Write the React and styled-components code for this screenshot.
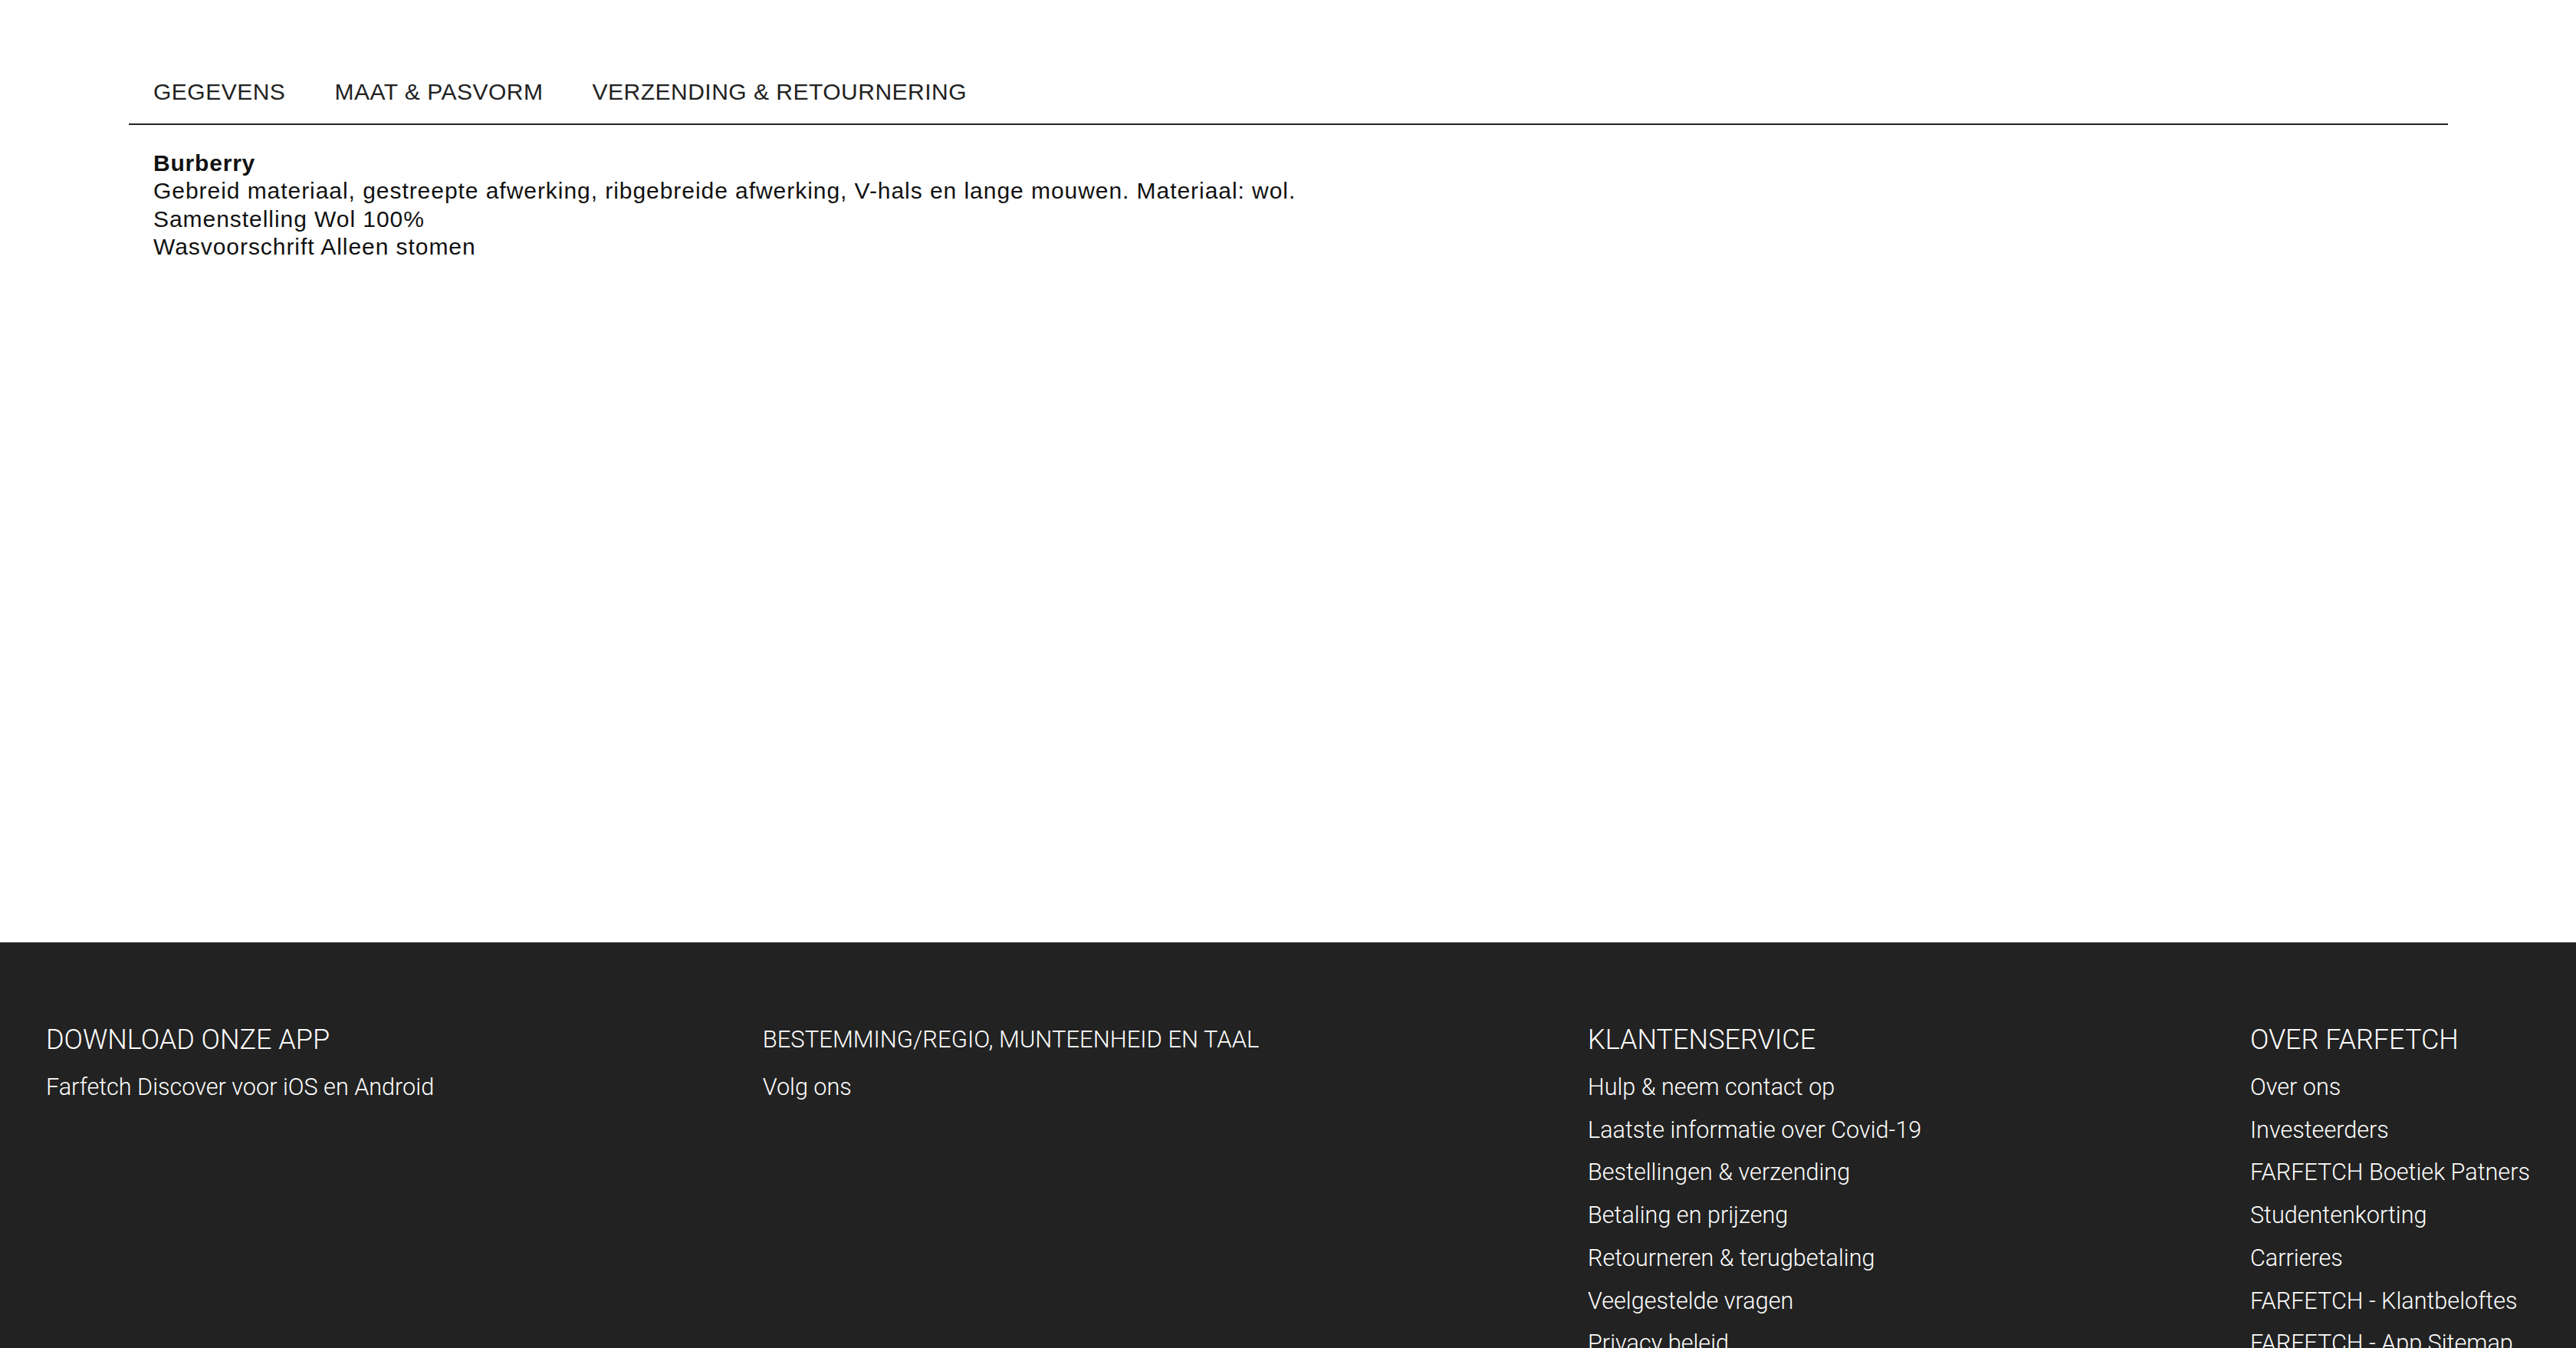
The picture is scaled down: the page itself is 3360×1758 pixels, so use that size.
import React from "react";
import styled, { createGlobalStyle } from "styled-components";

const Global = createGlobalStyle`
  html, body { margin: 0; padding: 0; background: #ffffff; }
  body { font-family: "Liberation Sans", Arial, sans-serif; color: #222222; }
  * { box-sizing: border-box; }
`;

const Main = styled.main`
  min-height: 1229px;
  padding: 102px 167px 0 168px;
`;

const TabBar = styled.nav`
  display: flex;
  gap: 64px;
  padding: 0 32px 23px;
  border-bottom: 2px solid #222222;
`;

const Tab = styled.span`
  font-size: 30px;
  line-height: 36px;
  letter-spacing: 0.5px;
  color: #222222;
  text-transform: uppercase;
  white-space: nowrap;
`;

const Details = styled.section`
  padding: 32px 32px 0;
  font-size: 30px;
  line-height: 36.4px;
  letter-spacing: 0.95px;
  color: #111111;
`;

const Brand = styled.p`
  margin: 0;
  font-weight: 700;
  letter-spacing: 0.8px;
`;

const Line = styled.p`
  margin: 0;
`;

const Footer = styled.footer`
  background: #222222;
  color: #ffffff;
  display: flex;
  justify-content: space-between;
  padding: 105px 60px 80px;
  font-family: Roboto, "Liberation Sans", sans-serif;
  font-weight: 300;
`;

const Column = styled.div`
  display: flex;
  flex-direction: column;
`;

const Heading = styled.h3`
  margin: 0 0 12px;
  font-weight: 300;
  font-size: ${(p) => (p.$small ? "31px" : "36px")};
  line-height: 44px;
  white-space: nowrap;
`;

const LinkList = styled.ul`
  list-style: none;
  margin: 0;
  padding: 0;
`;

const LinkItem = styled.li`
  font-size: 30.6px;
  line-height: 55.7px;
  white-space: nowrap;
  color: #ffffff;
`;

const columns = [
  { title: "DOWNLOAD ONZE APP", links: ["Farfetch Discover voor iOS en Android"] },
  { title: "BESTEMMING/REGIO, MUNTEENHEID EN TAAL", small: true, links: ["Volg ons"] },
  {
    title: "KLANTENSERVICE",
    links: [
      "Hulp & neem contact op",
      "Laatste informatie over Covid-19",
      "Bestellingen & verzending",
      "Betaling en prijzeng",
      "Retourneren & terugbetaling",
      "Veelgestelde vragen",
      "Privacy beleid",
      "Algemene voorwaarden",
    ],
  },
  {
    title: "OVER FARFETCH",
    links: [
      "Over ons",
      "Investeerders",
      "FARFETCH Boetiek Patners",
      "Studentenkorting",
      "Carrieres",
      "FARFETCH - Klantbeloftes",
      "FARFETCH - App Sitemap",
      "Sitemap",
    ],
  },
];

export default function App() {
  return (
    <>
      <Global />
      <Main>
        <TabBar>
          <Tab>Gegevens</Tab>
          <Tab>Maat &amp; Pasvorm</Tab>
          <Tab>Verzending &amp; Retournering</Tab>
        </TabBar>
        <Details>
          <Brand>Burberry</Brand>
          <Line>Gebreid materiaal, gestreepte afwerking, ribgebreide afwerking, V-hals en lange mouwen. Materiaal: wol.</Line>
          <Line>Samenstelling Wol 100%</Line>
          <Line>Wasvoorschrift Alleen stomen</Line>
        </Details>
      </Main>
      <Footer>
        {columns.map((c) => (
          <Column key={c.title}>
            <Heading $small={c.small}>{c.title}</Heading>
            <LinkList>
              {c.links.map((l) => (
                <LinkItem key={l}>{l}</LinkItem>
              ))}
            </LinkList>
          </Column>
        ))}
      </Footer>
    </>
  );
}
